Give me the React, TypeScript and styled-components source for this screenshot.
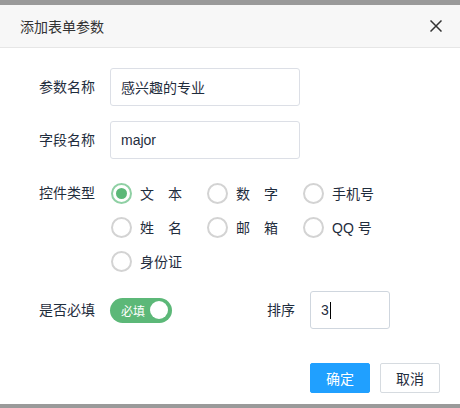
import { useState } from 'react';
import styled, { createGlobalStyle } from 'styled-components';

const GlobalStyle = createGlobalStyle`
  body {
    margin: 0;
    background: #9a9a9a;
    font-family: 'Liberation Sans', 'Noto Sans CJK SC', sans-serif;
  }
`;

const green = '#5cb878';

interface Option {
  value: string;
  label: string;
}

const controlTypes: Option[] = [
  { value: 'text', label: '文　本' },
  { value: 'number', label: '数　字' },
  { value: 'mobile', label: '手机号' },
  { value: 'name', label: '姓　名' },
  { value: 'email', label: '邮　箱' },
  { value: 'qq', label: 'QQ 号' },
  { value: 'idcard', label: '身份证' },
];

function App() {
  const [type, setType] = useState('text');
  const [required, setRequired] = useState(true);

  return (
    <>
      <GlobalStyle />
      <Page>
        <Dialog>
          {/* Header */}
          <Header>
            <Title>添加表单参数</Title>
            <CloseButton aria-label="close">
              <svg width="12" height="12" viewBox="0 0 12 12">
                <path d="M0.5 0.5 L11.5 11.5 M11.5 0.5 L0.5 11.5" stroke="#333" strokeWidth="1.5" fill="none" />
              </svg>
            </CloseButton>
          </Header>

          {/* Body */}
          <Body>
            <Row>
              <Label>参数名称</Label>
              <TextInput defaultValue="感兴趣的专业" />
            </Row>
            <Row>
              <Label>字段名称</Label>
              <TextInput defaultValue="major" />
            </Row>
            <Row $top>
              <Label>控件类型</Label>
              <RadioGroup>
                {controlTypes.map((opt) => (
                  <RadioItem key={opt.value} onClick={() => setType(opt.value)}>
                    <RadioCircle $checked={type === opt.value} />
                    <RadioText>{opt.label}</RadioText>
                  </RadioItem>
                ))}
              </RadioGroup>
            </Row>
            <Row>
              <Item>
                <Label>是否必填</Label>
                <Switch $on={required} onClick={() => setRequired(!required)}>
                  <SwitchText>{required ? '必填' : ''}</SwitchText>
                  <Knob />
                </Switch>
              </Item>
              <Item>
                <Label>排序</Label>
                <SortInput>
                  3<Caret />
                </SortInput>
              </Item>
            </Row>
          </Body>

          {/* Footer */}
          <Footer>
            <Button $primary>确定</Button>
            <Button>取消</Button>
          </Footer>
        </Dialog>
      </Page>
    </>
  );
}

const Page = styled.div`
  padding-top: 5px;
`;

const Dialog = styled.div`
  width: 460px;
  height: 399px;
  background: #fff;
  display: flex;
  flex-direction: column;
`;

const Header = styled.div`
  height: 42px;
  background: #f7f7f7;
  border-bottom: 1px solid #e6e6e6;
  display: flex;
  align-items: center;
  justify-content: space-between;
  padding: 0 18px 0 20px;
`;

const Title = styled.span`
  font-size: 14px;
  color: #333;
  margin-top: -1px;
`;

const CloseButton = styled.button`
  border: 0;
  background: none;
  padding: 0;
  width: 12px;
  height: 12px;
  display: flex;
  cursor: pointer;
`;

const Body = styled.div`
  padding: 20px 0 0;
  display: flex;
  flex-direction: column;
  flex: 1;
`;

const Row = styled.div<{ $top?: boolean }>`
  display: flex;
  align-items: ${({ $top }) => ($top ? 'flex-start' : 'center')};
  margin-bottom: ${({ $top }) => ($top ? '13px' : '15px')};
  margin-top: ${({ $top }) => ($top ? '2px' : '0')};
`;

const Item = styled.div`
  width: 200px;
  display: flex;
  align-items: center;
`;

const Label = styled.label`
  width: 95px;
  padding-right: 15px;
  text-align: right;
  font-size: 14px;
  line-height: 34px;
  color: #1f2d3d;
  flex-shrink: 0;
`;

const TextInput = styled.input`
  box-sizing: border-box;
  width: 190px;
  height: 38px;
  border: 1px solid #dcdfe6;
  border-radius: 3px;
  padding: 0 10px;
  font-family: inherit;
  font-size: 14px;
  color: #1f2d3d;
  outline: none;
`;

const SortInput = styled.div`
  box-sizing: border-box;
  width: 80px;
  height: 38px;
  border: 1px solid #cfd6de;
  border-radius: 3px;
  padding: 0 10px;
  font-size: 14px;
  color: #1f2d3d;
  display: flex;
  align-items: center;
`;

const Caret = styled.span`
  display: inline-block;
  width: 1px;
  height: 17px;
  background: #000;
  margin-left: 1px;
`;

const RadioGroup = styled.div`
  width: 290px;
  display: grid;
  grid-template-columns: repeat(3, 96px);
  grid-auto-rows: 34px;
`;

const RadioItem = styled.div`
  display: flex;
  align-items: center;
  padding-left: 1px;
  cursor: pointer;
`;

const RadioCircle = styled.span<{ $checked: boolean }>`
  box-sizing: border-box;
  width: 21px;
  height: 21px;
  border-radius: 50%;
  border: 2px solid ${({ $checked }) => ($checked ? '#8fd0a4' : '#d3d3d3')};
  display: flex;
  align-items: center;
  justify-content: center;

  &::after {
    content: '';
    width: 11px;
    height: 11px;
    border-radius: 50%;
    background: ${({ $checked }) => ($checked ? green : 'transparent')};
  }
`;

const RadioText = styled.span`
  margin-left: 8px;
  font-size: 14px;
  color: #1f2d3d;
  white-space: pre;
`;

const Switch = styled.div<{ $on: boolean }>`
  box-sizing: border-box;
  width: 62px;
  height: 25px;
  border-radius: 13px;
  background: ${({ $on }) => ($on ? green : '#bfcbd9')};
  display: flex;
  align-items: center;
  justify-content: space-between;
  padding: 0 4px 0 11px;
  cursor: pointer;
`;

const SwitchText = styled.span`
  font-size: 12px;
  color: #fff;
`;

const Knob = styled.span`
  width: 18px;
  height: 18px;
  border-radius: 50%;
  background: #fff;
`;

const Footer = styled.div`
  display: flex;
  justify-content: flex-end;
  gap: 10px;
  padding: 0 20px 11px;
`;

const Button = styled.button<{ $primary?: boolean }>`
  box-sizing: border-box;
  width: 60px;
  height: 30px;
  border-radius: 2px;
  border: 1px solid ${({ $primary }) => ($primary ? '#20a0ff' : '#d6dbe0')};
  background: ${({ $primary }) => ($primary ? '#20a0ff' : '#fff')};
  color: ${({ $primary }) => ($primary ? '#fff' : '#1f2d3d')};
  font-family: inherit;
  font-size: 14px;
  cursor: pointer;
  padding: 0;
`;

export default App;
